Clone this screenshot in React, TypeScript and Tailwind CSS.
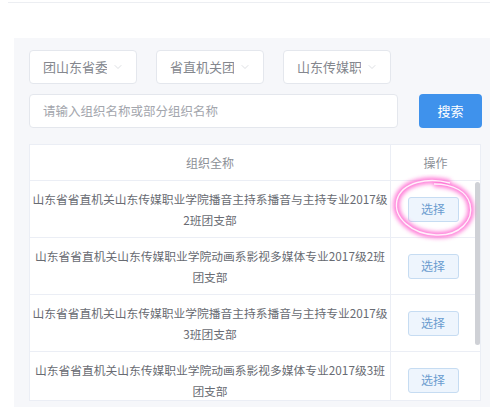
import { ChevronDown } from 'lucide-react';

const rows = [
  ['山东省省直机关山东传媒职业学院播音主持系播音与主持专业2017级', '2班团支部'],
  ['山东省省直机关山东传媒职业学院动画系影视多媒体专业2017级2班', '团支部'],
  ['山东省省直机关山东传媒职业学院播音主持系播音与主持专业2017级', '3班团支部'],
  ['山东省省直机关山东传媒职业学院动画系影视多媒体专业2017级3班', '团支部'],
];

const selects = ['团山东省委', '省直机关团', '山东传媒职'];

const App = () => {
  return (
    <div
      className="relative w-[490px] h-[407px] overflow-hidden bg-white"
      style={{ fontFamily: '"Noto Sans CJK SC", "Noto Sans", sans-serif' }}
    >
      {/* top divider */}
      <div className="mt-[2px] ml-[8px] h-px bg-[#eceef2]" />

      {/* filter panel */}
      <div className="mt-[35px] ml-[14px] h-[370px] bg-[#f6f7fa] pl-[15px] pt-[12px]">
        <div className="flex gap-[19px]">
          {selects.map((s) => (
            <div
              key={s}
              className="flex h-[34px] w-[108px] items-center justify-between rounded-[4px] border border-[#e4e7ed] bg-white pl-[13px] pr-[12px]"
            >
              <span className="w-[64px] overflow-hidden whitespace-nowrap text-[13px] text-[#84878e]">{s}</span>
              <ChevronDown className="h-[12px] w-[12px] text-[#c8cbd2]" strokeWidth={1.25} />
            </div>
          ))}
        </div>

        <div className="mt-[10px] flex items-center gap-[21px]">
          <div className="flex h-[34px] w-[369px] items-center rounded-[4px] border border-[#e4e7ed] bg-white pl-[13px] text-[12.5px] text-[#a3a6ad]">
            请输入组织名称或部分组织名称
          </div>
          <div className="flex h-[34px] w-[63px] items-center justify-center rounded-[4px] bg-[#3f92ec] text-[13px] text-white">
            搜索
          </div>
        </div>

        {/* table */}
        <div className="relative mt-[16px] w-[452px] border border-[#ebeef5] bg-white">
          <div className="flex h-[36px] border-b border-[#ebeef5] text-[12px] text-[#8c8f96]">
            <div className="flex w-[361px] items-center justify-center border-r border-[#ebeef5]">组织全称</div>
            <div className="flex flex-1 items-center justify-center">操作</div>
          </div>
          <div className="h-[219px] overflow-hidden">
            {rows.map(([a, b], i) => (
              <div key={i} className="flex h-[57px] border-b border-[#ebeef5]">
                <div className="flex w-[361px] flex-col items-center justify-center border-r border-[#ebeef5] text-[11.75px] leading-[21px] text-[#686b72]">
                  <span className="whitespace-nowrap">{a}</span>
                  <span className="whitespace-nowrap">{b}</span>
                </div>
                <div className="flex flex-1 items-center justify-center pr-[5px]">
                  <div className="flex h-[25px] w-[51px] items-center justify-center rounded-[3px] border border-[#c6dcf2] bg-[#eef5fd] text-[12px] text-[#6a9ccf]">
                    选择
                  </div>
                </div>
              </div>
            ))}
          </div>
          {/* scrollbar */}
          <div className="absolute right-[0px] top-[37px] h-[163px] w-[5px] rounded-[3px] bg-[#cfd1d6]" />
        </div>
      </div>

      {/* pink hand-drawn circle */}
      <svg className="pointer-events-none absolute left-[388px] top-[174px]" width="92" height="70" viewBox="0 0 92 70">
        <defs>
          <filter id="glow" x="-30%" y="-30%" width="160%" height="160%">
            <feGaussianBlur stdDeviation="2.2" />
          </filter>
        </defs>
        <path
          d="M62 9 C40 3 14 8 9 26 C5 44 24 60 48 61 C72 62 86 46 82 30 C79 18 66 10 46 10"
          fill="none"
          stroke="#ff5fcf"
          strokeWidth="6"
          filter="url(#glow)"
          opacity="0.85"
        />
        <path
          d="M62 9 C40 3 14 8 9 26 C5 44 24 60 48 61 C72 62 86 46 82 30 C79 18 66 10 46 10"
          fill="none"
          stroke="#fff0fb"
          strokeWidth="1.4"
        />
      </svg>
    </div>
  );
};

export default App;
